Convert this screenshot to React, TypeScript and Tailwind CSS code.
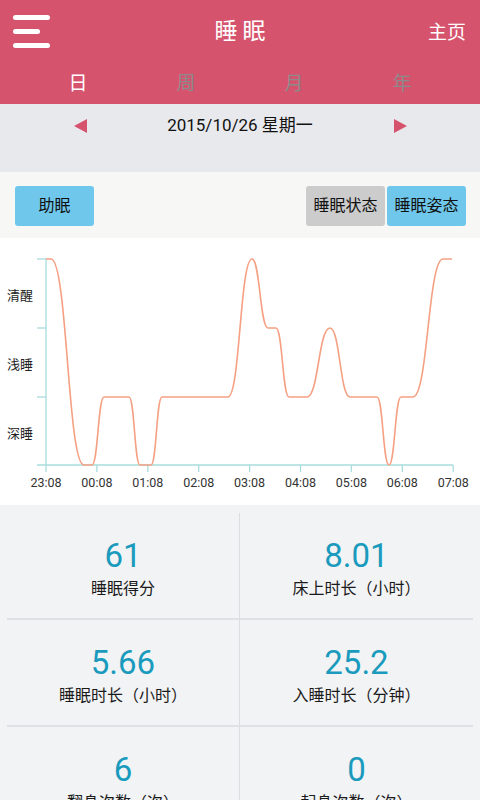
import React from 'react';

const CJK = { fontFamily: 'Roboto, "Noto Sans CJK SC", sans-serif' };

// chart levels (local y inside the chart svg)
const A = 21;
const B = 90;
const C = 159;
const D = 227;

const pts: [number, number][] = [
  [46, A], [51, A], [84, D], [92, D], [104, C], [129, C], [140, D], [151, D],
  [162, C], [228, C], [252, A], [268, B], [276, B], [289, C], [307, C], [330, B],
  [350, C], [377, C], [389, D], [401, C], [413, C], [443, A], [452, A],
];

function buildPath() {
  let d = `M${pts[0][0]} ${pts[0][1]}`;
  for (let i = 1; i < pts.length; i++) {
    const [x0, y0] = pts[i - 1];
    const [x1, y1] = pts[i];
    if (y0 === y1) {
      d += ` L${x1} ${y1}`;
    } else {
      const m = (x0 + x1) / 2;
      d += ` C${m} ${y0} ${m} ${y1} ${x1} ${y1}`;
    }
  }
  return d;
}

const times = ['23:08', '00:08', '01:08', '02:08', '03:08', '04:08', '05:08', '06:08', '07:08'];

function SleepChart() {
  const axis = '#a9dcdc';
  return (
    <svg width="480" height="267" viewBox="0 0 480 267" className="block">
      <line x1="46" y1={A} x2="46" y2={D} stroke={axis} strokeWidth="1.3" />
      <line x1="37" y1={D} x2="453" y2={D} stroke={axis} strokeWidth="1.3" />
      {[A, B, C].map((y) => (
        <line key={y} x1="37" y1={y} x2="46" y2={y} stroke={axis} strokeWidth="1.3" />
      ))}
      {times.map((t, i) => {
        const x = 46 + i * 50.9;
        return (
          <g key={t}>
            <line x1={x} y1={D} x2={x} y2={D + 7} stroke={axis} strokeWidth="1.3" />
            <text x={x} y={D + 22} textAnchor="middle" fontSize="12.5" fill="#333" style={CJK}>
              {t}
            </text>
          </g>
        );
      })}
      <text x="7" y={62} fontSize="13" fill="#222" style={CJK}>清醒</text>
      <text x="7" y={131} fontSize="13" fill="#222" style={CJK}>浅睡</text>
      <text x="7" y={200} fontSize="13" fill="#222" style={CJK}>深睡</text>
      <path d={buildPath()} fill="none" stroke="#f5a083" strokeWidth="1.6" />
    </svg>
  );
}

const stats = [
  { v: '61', l: '睡眠得分' },
  { v: '8.01', l: '床上时长（小时）' },
  { v: '5.66', l: '睡眠时长（小时）' },
  { v: '25.2', l: '入睡时长（分钟）' },
  { v: '6', l: '翻身次数（次）' },
  { v: '0', l: '起身次数（次）' },
];

export default function App() {
  return (
    <div className="w-[480px] h-[800px] overflow-hidden bg-[#f2f3f5]" style={CJK}>
      {/* header */}
      <div className="bg-[#d6536d]">
        <div className="relative h-[64px] flex items-center justify-center">
          <div className="absolute left-[13px] top-[15px] flex flex-col gap-[9px]">
            <div className="w-[37px] h-[5px] rounded-full bg-white" />
            <div className="w-[27px] h-[5px] rounded-full bg-white" />
            <div className="w-[37px] h-[5px] rounded-full bg-white" />
          </div>
          <div className="text-white text-[23px] tracking-[5px] pl-[5px]">睡眠</div>
          <div className="absolute right-[14px] top-[20px] text-white text-[19px] leading-[26px]">主页</div>
        </div>
        <div className="h-[40px] px-[24px] flex items-center text-[19px]">
          <div className="flex-1 text-center text-white">日</div>
          <div className="flex-1 text-center text-[#8c8a8c]">周</div>
          <div className="flex-1 text-center text-[#8c8a8c]">月</div>
          <div className="flex-1 text-center text-[#8c8a8c]">年</div>
        </div>
      </div>

      {/* date */}
      <div className="h-[68px] bg-[#e8e9ed]">
        <div className="h-[44px] flex items-center justify-center relative">
          <div className="absolute left-[74px] top-[15px] w-0 h-0 border-y-[7.5px] border-y-transparent border-r-[13px] border-r-[#d6536d]" />
          <div className="text-[17px] text-[#111]">2015/10/26 星期一</div>
          <div className="absolute left-[394px] top-[15px] w-0 h-0 border-y-[7.5px] border-y-transparent border-l-[13px] border-l-[#d6536d]" />
        </div>
      </div>

      {/* buttons */}
      <div className="h-[66px] bg-[#f7f7f5] pt-[14px] pl-[15px] pr-[14px] flex">
        <button className="w-[79px] h-[40px] rounded-[3px] bg-[#6fc8ec] text-[16px] text-[#111]">助眠</button>
        <div className="flex-1" />
        <button className="w-[79px] h-[40px] rounded-[3px] bg-[#cccccc] text-[16px] text-[#111]">睡眠状态</button>
        <button className="ml-[2px] w-[79px] h-[40px] rounded-[3px] bg-[#6fc8ec] text-[16px] text-[#111]">睡眠姿态</button>
      </div>

      {/* chart */}
      <div className="bg-white h-[267px]">
        <SleepChart />
      </div>

      {/* stats */}
      <div className="pt-[8px] px-[7px]">
        <div className="grid grid-cols-2">
          {stats.map((s, i) => (
            <div
              key={s.l}
              className={`h-[107px] flex flex-col items-center pt-[24px] ${i % 2 === 0 ? 'border-r border-r-[#dcdde0]' : ''} ${i < 4 ? 'border-b-2 border-b-[#e0e1e4]' : ''}`}
            >
              <div className="text-[33px] leading-[38px] text-[#1a9bbd]">{s.v}</div>
              <div className="mt-[3px] text-[16px] leading-[22px] text-[#1a1a1a]">{s.l}</div>
            </div>
          ))}
        </div>
      </div>
    </div>
  );
}
